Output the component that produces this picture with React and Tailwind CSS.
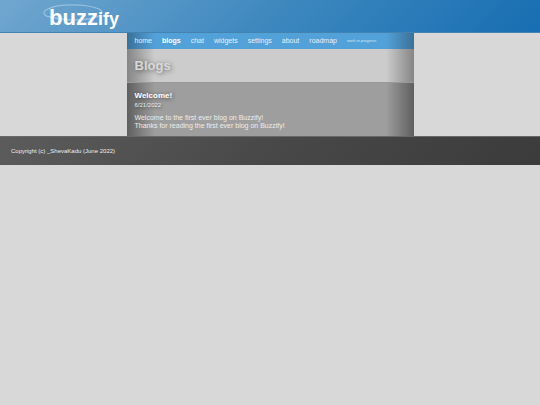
const NAV_ITEMS = ['home', 'blogs', 'chat', 'widgets', 'settings', 'about', 'roadmap'];

const POSTS = [
  {
    title: 'Welcome!',
    date: '6/21/2022',
    lines: ['Welcome to the first ever blog on Buzzify!', 'Thanks for reading the first ever blog on Buzzify!'],
  },
];

const Logo = () => (
  <svg viewBox="0 0 80 30" className="h-[30px] w-20" role="img" aria-label="buzzify">
    <path
      d="M7 16C0 15 -1 10 5 8C16 2 44 3 56 8C62 11 58 15 50 17C38 20 18 19 7 16"
      fill="none"
      stroke="#a9cbe5"
      strokeOpacity="0.75"
      strokeWidth="1.3"
    />
    <text x="6" y="24" fill="#fff" fontSize="22" fontWeight="bold">
      buzz<tspan fontSize="18">ify</tspan>
    </text>
  </svg>
);

const Nav = ({ active }) => (
  <nav className="flex h-4 items-center gap-[10px] whitespace-nowrap px-2 bg-[#53a1d9] bg-[linear-gradient(to_right,rgba(0,0,0,0.3),transparent_28px,transparent_calc(100%-28px),rgba(0,0,0,0.3))] text-[7px] leading-4">
    {NAV_ITEMS.map((item) => (
      <a key={item} href={`#${item}`} className={item === active ? 'font-bold text-white' : 'text-[#e6f1f9]'}>
        {item}
      </a>
    ))}
    <span className="text-[4px] text-[#d3e7f5]">work in progress</span>
  </nav>
);

const Post = ({ title, date, lines }) => (
  <article className="px-2 pt-2 pb-[6px] text-[7px] leading-2 text-[#ededed]">
    <h2 className="text-[8px] leading-[10px] font-bold text-white [text-shadow:1px_1px_4px_rgba(0,0,0,0.6)]">{title}</h2>
    <p className="text-[6px] leading-2 [text-shadow:1px_1px_3px_rgba(0,0,0,0.5)]">{date}</p>
    <div className="mt-[5px]">
      {lines.map((line) => (
        <p key={line}>{line}</p>
      ))}
    </div>
  </article>
);

export default function App() {
  return (
    <div className="min-h-screen bg-[#d8d8d8] font-['Liberation_Sans',Arial,sans-serif]">
      <header className="flex h-[33px] items-center pl-[43px] border-b border-[#4383b2] bg-[linear-gradient(135deg,#70a7cf,#3e88bf_50%,#176eb2)]">
        <Logo />
      </header>
      <main className="mx-auto w-full max-w-[287px]">
        <Nav active="blogs" />
        <div className="flex h-[34px] items-center border-b border-[#999999] px-2 bg-[#cccccc] bg-[linear-gradient(to_right,rgba(0,0,0,0.35),transparent_28px,transparent_calc(100%-28px),rgba(0,0,0,0.35))]">
          <h1 className="text-[13px] leading-4 font-bold text-[#d8d8d8] [text-shadow:1px_1px_5px_rgba(0,0,0,0.5)]">Blogs</h1>
        </div>
        <div className="bg-[#9e9e9e] bg-[linear-gradient(to_right,rgba(0,0,0,0.4),transparent_28px,transparent_calc(100%-28px),rgba(0,0,0,0.4))]">
          {POSTS.map((post) => (
            <Post key={post.title} {...post} />
          ))}
        </div>
      </main>
      <footer className="border-t border-[#686868] px-[11px] py-[10px] text-[6px] leading-2 text-[#eeeeee] bg-[linear-gradient(135deg,#5c5c5c,#484848_50%,#3b3b3b)]">
        Copyright (c) _ShevaKadu (June 2022)
      </footer>
    </div>
  );
}
